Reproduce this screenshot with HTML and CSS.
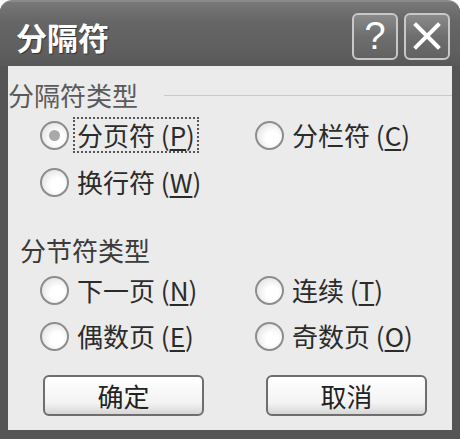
FILE: index.html
```html
<!DOCTYPE html>
<html lang="zh-CN">

<head>
  <meta charset="UTF-8" />
  <title>分隔符</title>
  <link rel="stylesheet" href="styles.css">
</head>

<body>

  <!-- Dialog window -->
  <div class="window">
    <div class="titlebar">
      <span class="title">分隔符</span>
      <div class="caption-buttons">
        <button class="cap-btn">?</button>
        <button class="cap-btn">
          <svg width="30" height="30" viewBox="0 0 30 30">
            <path d="M4 4 L26 26 M26 4 L4 26" stroke="#fff" stroke-width="4" stroke-linecap="square" />
          </svg>
        </button>
      </div>
    </div>

    <div class="client">
      <!-- Break types -->
      <div class="group-label first">
        <span>分隔符类型</span>
        <span class="rule"></span>
      </div>
      <div class="options">
        <label class="option focused"><span class="radio checked"></span><span class="text">分页符 (<u>P</u>)</span></label>
        <label class="option"><span class="radio"></span><span class="text">分栏符 (<u>C</u>)</span></label>
        <label class="option"><span class="radio"></span><span class="text">换行符 (<u>W</u>)</span></label>
      </div>

      <!-- Section break types -->
      <div class="group-label second">分节符类型</div>
      <div class="options tight">
        <label class="option"><span class="radio"></span><span class="text">下一页 (<u>N</u>)</span></label>
        <label class="option"><span class="radio"></span><span class="text">连续 (<u>T</u>)</span></label>
        <label class="option"><span class="radio"></span><span class="text">偶数页 (<u>E</u>)</span></label>
        <label class="option"><span class="radio"></span><span class="text">奇数页 (<u>O</u>)</span></label>
      </div>

      <div class="actions">
        <button class="btn">确定</button>
        <button class="btn">取消</button>
      </div>
    </div>
  </div>

</body>

</html>
```

FILE: styles.css
```css
body {
  margin: 0;
  padding: 0;
  background: #fff;
  font-family: "Noto Sans CJK SC", "Noto Sans", sans-serif;
}

.window {
  width: 460px;
  height: 439px;
  background: #555;
  border-radius: 12px 12px 0 0;
  display: flex;
  flex-direction: column;
  overflow: hidden;
  box-sizing: border-box;
  border-top: 2px solid #8a8a8a;
}

/* Title bar */
.titlebar {
  height: 64px;
  display: flex;
  align-items: center;
  justify-content: space-between;
  padding: 0 10px 0 16px;
  background: linear-gradient(#787878, #666 30%, #5e5e5e 80%, #585858);
}

.title {
  color: #fff;
  font-size: 31px;
  font-weight: bold;
  text-shadow: 1px 1px 1px #333;
  margin-top: 4px;
}

.caption-buttons {
  display: flex;
  gap: 6px;
  margin-top: 4px;
}

.cap-btn {
  width: 46px;
  height: 47px;
  padding: 0;
  border: 2px solid #c8c8c8;
  border-radius: 6px;
  background: linear-gradient(#8a8a8a, #6e6e6e 50%, #626262);
  color: #fff;
  font-family: "Liberation Sans", sans-serif;
  font-size: 38px;
  line-height: 1;
  display: flex;
  align-items: center;
  justify-content: center;
}

/* Client area */
.client {
  flex: 1;
  margin: 0 8px 9px 8px;
  background: #ebebeb;
  color: #2b2b2b;
  display: flex;
  flex-direction: column;
}

.group-label {
  font-size: 26px;
  line-height: 30px;
  height: 30px;
}

.group-label.first {
  margin-top: 14px;
  color: #5a5a5a;
  display: flex;
  align-items: center;
}

.group-label.first .rule {
  flex: 1;
  height: 1px;
  background: #c9c9c9;
  margin-left: 26px;
}

.group-label.second {
  margin-top: 34px;
  padding-left: 12px;
  color: #3a3a3a;
}

.options {
  display: grid;
  grid-template-columns: 215px 1fr;
  row-gap: 9px;
  padding-left: 32px;
  margin-top: 6px;
}

.options.tight {
  row-gap: 8px;
}

.option {
  display: flex;
  align-items: center;
  height: 38px;
  font-size: 26px;
}

.option .text {
  margin-left: 4px;
  padding: 0 2px;
  border: 2px dotted transparent;
  line-height: 32px;
}

.option.focused .text {
  border-color: #555;
}

.option u {
  text-underline-offset: 3px;
}

.radio {
  width: 25px;
  height: 25px;
  border-radius: 50%;
  border: 2px solid #8d8d8d;
  background: radial-gradient(circle at 60% 60%, #ffffff 30%, #e6e6e6 75%, #cfcfcf);
  flex: none;
  position: relative;
}

.radio.checked::after {
  content: "";
  position: absolute;
  left: 7px;
  top: 7px;
  width: 11px;
  height: 11px;
  border-radius: 50%;
  background: #a9a9a9;
}

/* Buttons */
.actions {
  display: flex;
  justify-content: space-between;
  padding: 0 25px 0 35px;
  margin-top: auto;
  margin-bottom: 14px;
}

.btn {
  width: 161px;
  height: 41px;
  border: 2px solid #6e6e6e;
  border-radius: 6px;
  background: linear-gradient(#ffffff, #f3f3f3 70%, #d6d6d6);
  font-family: "Noto Sans CJK SC", sans-serif;
  font-size: 26px;
  color: #222;
  padding: 0;
  line-height: 1;
}
```
